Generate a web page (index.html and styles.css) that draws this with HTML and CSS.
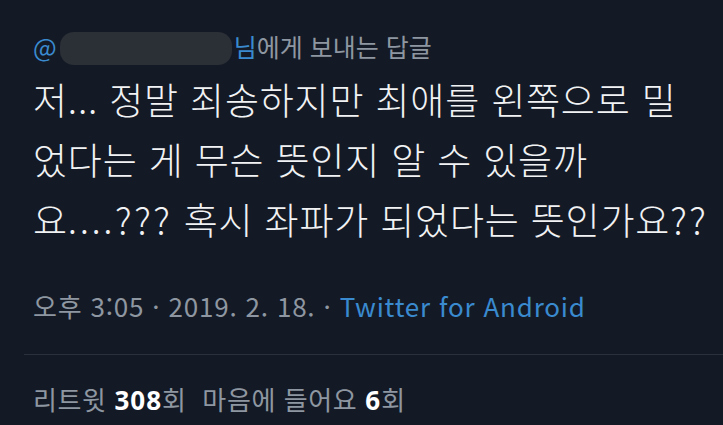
FILE: index.html
```html
<!DOCTYPE html>
<html lang="ko">
<head>
  <meta charset="UTF-8">
  <meta name="viewport" content="width=device-width, initial-scale=1.0">
  <title>Tweet</title>
  <link rel="stylesheet" href="styles.css">
</head>
<body>

  <!-- Reply header -->
  <div class="reply-to"><span class="at">@</span><span class="hidden-name"></span><span class="at">님</span>에게 보내는 답글</div>

  <!-- Tweet text -->
  <p class="tweet-text">저... 정말 죄송하지만 최애를 왼쪽으로 밀<br>었다는 게 무슨 뜻인지 알 수 있을까<br>요<span class="punct">....???</span> 혹시 좌파가 되었다는 뜻인가요<span class="punct">??</span></p>

  <!-- Meta -->
  <div class="meta">오후 3:05 · 2019. 2. 18. · <span class="source">Twitter for Android</span></div>

  <div class="divider"></div>

  <!-- Stats -->
  <div class="stats">리트윗 <b>308</b>회&nbsp; 마음에 들어요 <b>6</b>회</div>

</body>
</html>
```

FILE: styles.css
```css
body {
  margin: 0;
  background-color: #141a25;
  font-family: "Noto Sans CJK KR", "Noto Sans", sans-serif;
  color: #8e97a1;
  overflow: hidden;
}

.reply-to {
  padding: 28px 0 0 33px;
  font-size: 25px;
  line-height: 36px;
  height: 36px;
  white-space: nowrap;
}

.at {
  color: #3a8ad0;
}

.hidden-name {
  display: inline-block;
  vertical-align: middle;
  width: 172px;
  height: 33px;
  margin: -4px 2px 0 3px;
  border-radius: 14px;
  background-color: #2b2f36;
}

.tweet-text {
  margin: 5px 0 0 33px;
  color: #f1f2f4;
  font-size: 37px;
  font-weight: 300;
  line-height: 60px;
  letter-spacing: 0.8px;
  white-space: nowrap;
}

.tweet-text .punct {
  letter-spacing: 2.5px;
}

.meta {
  margin: 40px 0 0 33px;
  font-size: 26px;
  line-height: 34px;
  letter-spacing: 0.8px;
}

.source {
  color: #3a8ad0;
}

.divider {
  margin: 31px 0 0 24px;
  height: 1px;
  background-color: #2a313c;
}

.stats {
  margin: 27px 0 0 33px;
  font-size: 26px;
  line-height: 34px;
  letter-spacing: 0.6px;
}

.stats b {
  color: #ffffff;
  font-family: "Noto Sans", sans-serif;
  font-weight: 700;
  letter-spacing: 1px;
}
```
